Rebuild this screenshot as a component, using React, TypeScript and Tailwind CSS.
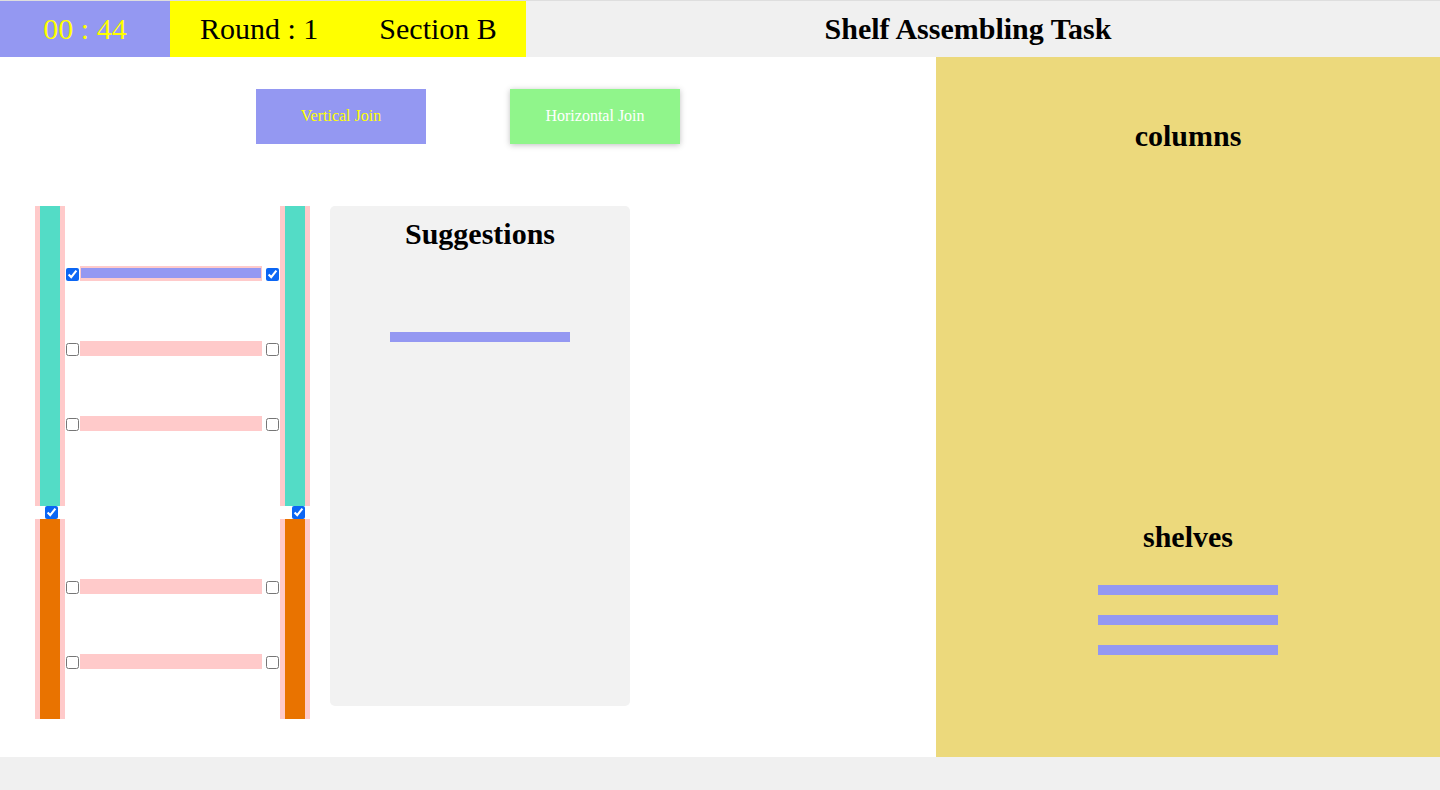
export default function App() {
  const blue = "bg-[#9498f2]";

  const Column = ({ color }: { color: string }) => (
    <div className="h-full w-[30px] bg-[#ffcaca] px-[5px]">
      <div className={`h-full w-full ${color}`} />
    </div>
  );

  const ShelfRow = ({ checked }: { checked: boolean }) => (
    <div className="flex h-[15px] items-end">
      <input type="checkbox" defaultChecked={checked} className="m-0 ml-px h-[13px] w-[13px] accent-[#0b66f4]" />
      <div className="ml-px h-[15px] w-[182px] bg-[#ffcaca] px-px pt-[2px] pb-[3px]">
        {checked && <div className={`h-full w-full ${blue}`} />}
      </div>
      <input type="checkbox" defaultChecked={checked} className="m-0 ml-[4px] h-[13px] w-[13px] accent-[#0b66f4]" />
    </div>
  );

  const Unit = ({ height, color, rows }: { height: string; color: string; rows: boolean[] }) => (
    <div className={`flex items-start ${height}`}>
      <Column color={color} />
      <div className="flex w-[215px] flex-col gap-[60px] pt-[60px]">
        {rows.map((c, i) => (
          <ShelfRow key={i} checked={c} />
        ))}
      </div>
      <Column color={color} />
    </div>
  );

  return (
    <div className="min-h-[790px] bg-[#f0f0f0] font-['Liberation_Serif',serif] text-black">
      {/* Top bar */}
      <header className="flex h-[57px] border-t border-[#dedede]">
        <div className={`flex w-[170px] shrink-0 items-center justify-center pb-[2px] ${blue} text-[30px] text-[#ffff00]`}>
          00 : 44
        </div>
        <div className="flex w-[356px] shrink-0 items-center gap-[61px] whitespace-nowrap bg-[#ffff00] px-[30px] pb-[2px] text-[30px]">
          <span>Round : 1</span>
          <span>Section B</span>
        </div>
        <div className="flex flex-1 items-center justify-center whitespace-nowrap pr-[30px] pb-[2px] text-[30px] font-bold">
          Shelf Assembling Task
        </div>
      </header>

      <main className="flex h-[700px]">
        {/* Work area */}
        <div className="flex-1 bg-white">
          <div className="flex gap-[84px] pl-[256px] pt-[32px]">
            <button className={`h-[55px] w-[170px] pb-[2px] ${blue} text-[16px] text-[#ffff00]`}>Vertical Join</button>
            <button className="h-[55px] w-[170px] bg-[#90f58b] pb-[2px] text-[16px] text-white shadow-[0_1px_6px_rgba(0,0,0,0.25)]">
              Horizontal Join
            </button>
          </div>

          <div className="ml-[35px] mt-[62px] flex items-start gap-5">
            <div className="flex flex-col">
              <Unit height="h-[300px]" color="bg-[#53dcc6]" rows={[true, false, false]} />
              <div className="flex h-[13px]">
                <input type="checkbox" defaultChecked className="m-0 ml-[10px] h-[13px] w-[13px] accent-[#0b66f4]" />
                <input type="checkbox" defaultChecked className="m-0 ml-[234px] h-[13px] w-[13px] accent-[#0b66f4]" />
              </div>
              <Unit height="h-[200px]" color="bg-[#e97300]" rows={[false, false]} />
            </div>

            <div className="h-[500px] w-[300px] rounded-[5px] bg-[#f2f2f2] pt-[10px]">
              <h2 className="text-center text-[30px] font-bold leading-[36px]">Suggestions</h2>
              <div className={`mx-auto mt-[80px] h-[10px] w-[180px] ${blue}`} />
            </div>
          </div>
        </div>

        {/* Parts panel */}
        <aside className="flex w-[504px] flex-col items-center bg-[#ecd97c] pt-[61px]">
          <h2 className="text-[30px] font-bold leading-[36px]">columns</h2>
          <h2 className="mt-[365px] text-[30px] font-bold leading-[36px]">shelves</h2>
          <div className="mt-[30px] flex flex-col gap-[20px]">
            <div className={`h-[10px] w-[180px] ${blue}`} />
            <div className={`h-[10px] w-[180px] ${blue}`} />
            <div className={`h-[10px] w-[180px] ${blue}`} />
          </div>
        </aside>
      </main>
    </div>
  );
}
